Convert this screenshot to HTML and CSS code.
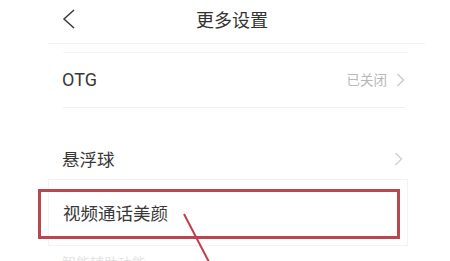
FILE: index.html
```html
<!DOCTYPE html>
<html lang="zh-CN">
<head>
<meta charset="utf-8">
<title>更多设置</title>
<link rel="stylesheet" href="styles.css">
</head>
<body>
<div class="page">
  <header class="header">
    <svg class="back" width="14" height="20" viewBox="0 0 14 20"><polyline points="12,1 2,10 12,19" fill="none" stroke="#3a3a3a" stroke-width="1.5"/></svg>
    <h1 class="title">更多设置</h1>
  </header>
  <div class="rule rule-wide"></div>
  <div class="rule rule-narrow"></div>
  <div class="row row-otg">
    <span class="label latin">OTG</span>
    <span class="value">已关闭<svg class="chev" width="9" height="14" viewBox="0 0 9 14"><polyline points="1.5,1 7.5,7 1.5,13" fill="none" stroke="#c8c8c8" stroke-width="1.3"/></svg></span>
  </div>
  <div class="rule rule-item"></div>
  <div class="row row-float">
    <span class="label">悬浮球</span>
    <svg class="chev" width="9" height="14" viewBox="0 0 9 14"><polyline points="1.5,1 7.5,7 1.5,13" fill="none" stroke="#d0d0d0" stroke-width="1.3"/></svg>
  </div>
  <div class="card">
    <span class="label">视频通话美颜</span>
    <div class="highlight"></div>
  </div>
  <div class="row row-next">
    <span class="label faint">智能辅助功能</span>
  </div>
  <svg class="pointer" width="450" height="261" viewBox="0 0 450 261"><line x1="184" y1="214" x2="209" y2="262" stroke="#c23d4b" stroke-width="2"/></svg>
</div>
</body>
</html>
```
FILE: styles.css
```css
html, body {
  margin: 0;
  padding: 0;
  overflow: hidden;
  background: #ffffff;
}
.page {
  position: relative;
  width: 450px;
  height: 261px;
  overflow: hidden;
  font-family: "Noto Sans CJK SC", sans-serif;
  color: #333333;
}
.header {
  height: 38px;
  display: flex;
  align-items: center;
  padding-left: 62px;
  gap: 120px;
}
.back {
  display: block;
}
.title {
  margin: 0;
  font-size: 18px;
  font-weight: 400;
  color: #333333;
  line-height: 1;
}
.rule {
  height: 1px;
  background: #f2f2f2;
}
.rule-wide {
  margin: 5px 0 0 48px;
  width: 377px;
}
.rule-narrow {
  margin: 8px 0 0 63px;
  width: 345px;
  background: #f4f4f4;
}
.rule-item {
  margin-left: 63px;
  width: 342px;
  background: #efefef;
}
.row {
  display: flex;
  align-items: center;
  justify-content: space-between;
  margin-left: 62px;
  width: 343px;
}
.row-otg {
  height: 54px;
}
.row-float {
  margin-top: 30px;
  height: 41px;
  width: 341px;
}
.label {
  font-size: 17.5px;
  line-height: 1;
  color: #383838;
}
.latin {
  font-family: Roboto, "Noto Sans CJK SC", sans-serif;
  font-size: 18px;
}
.value {
  display: flex;
  align-items: center;
  gap: 9px;
  font-size: 13.5px;
  color: #b8b8b8;
  line-height: 1;
}
.chev {
  display: block;
}
.card {
  position: relative;
  margin-left: 48px;
  width: 344px;
  height: 65px;
  padding-left: 14px;
  border: 1px solid #f3f3f3;
  display: flex;
  align-items: center;
}
.highlight {
  position: absolute;
  left: -11px;
  top: 9px;
  width: 356px;
  height: 44px;
  border: 3px solid #b8474f;
}
.row-next {
  height: 30px;
  align-items: flex-start;
  padding-top: 9px;
}
.faint {
  color: #e4e4e4;
  font-size: 14px;
}
.pointer {
  position: absolute;
  left: 0;
  top: 0;
}
```
